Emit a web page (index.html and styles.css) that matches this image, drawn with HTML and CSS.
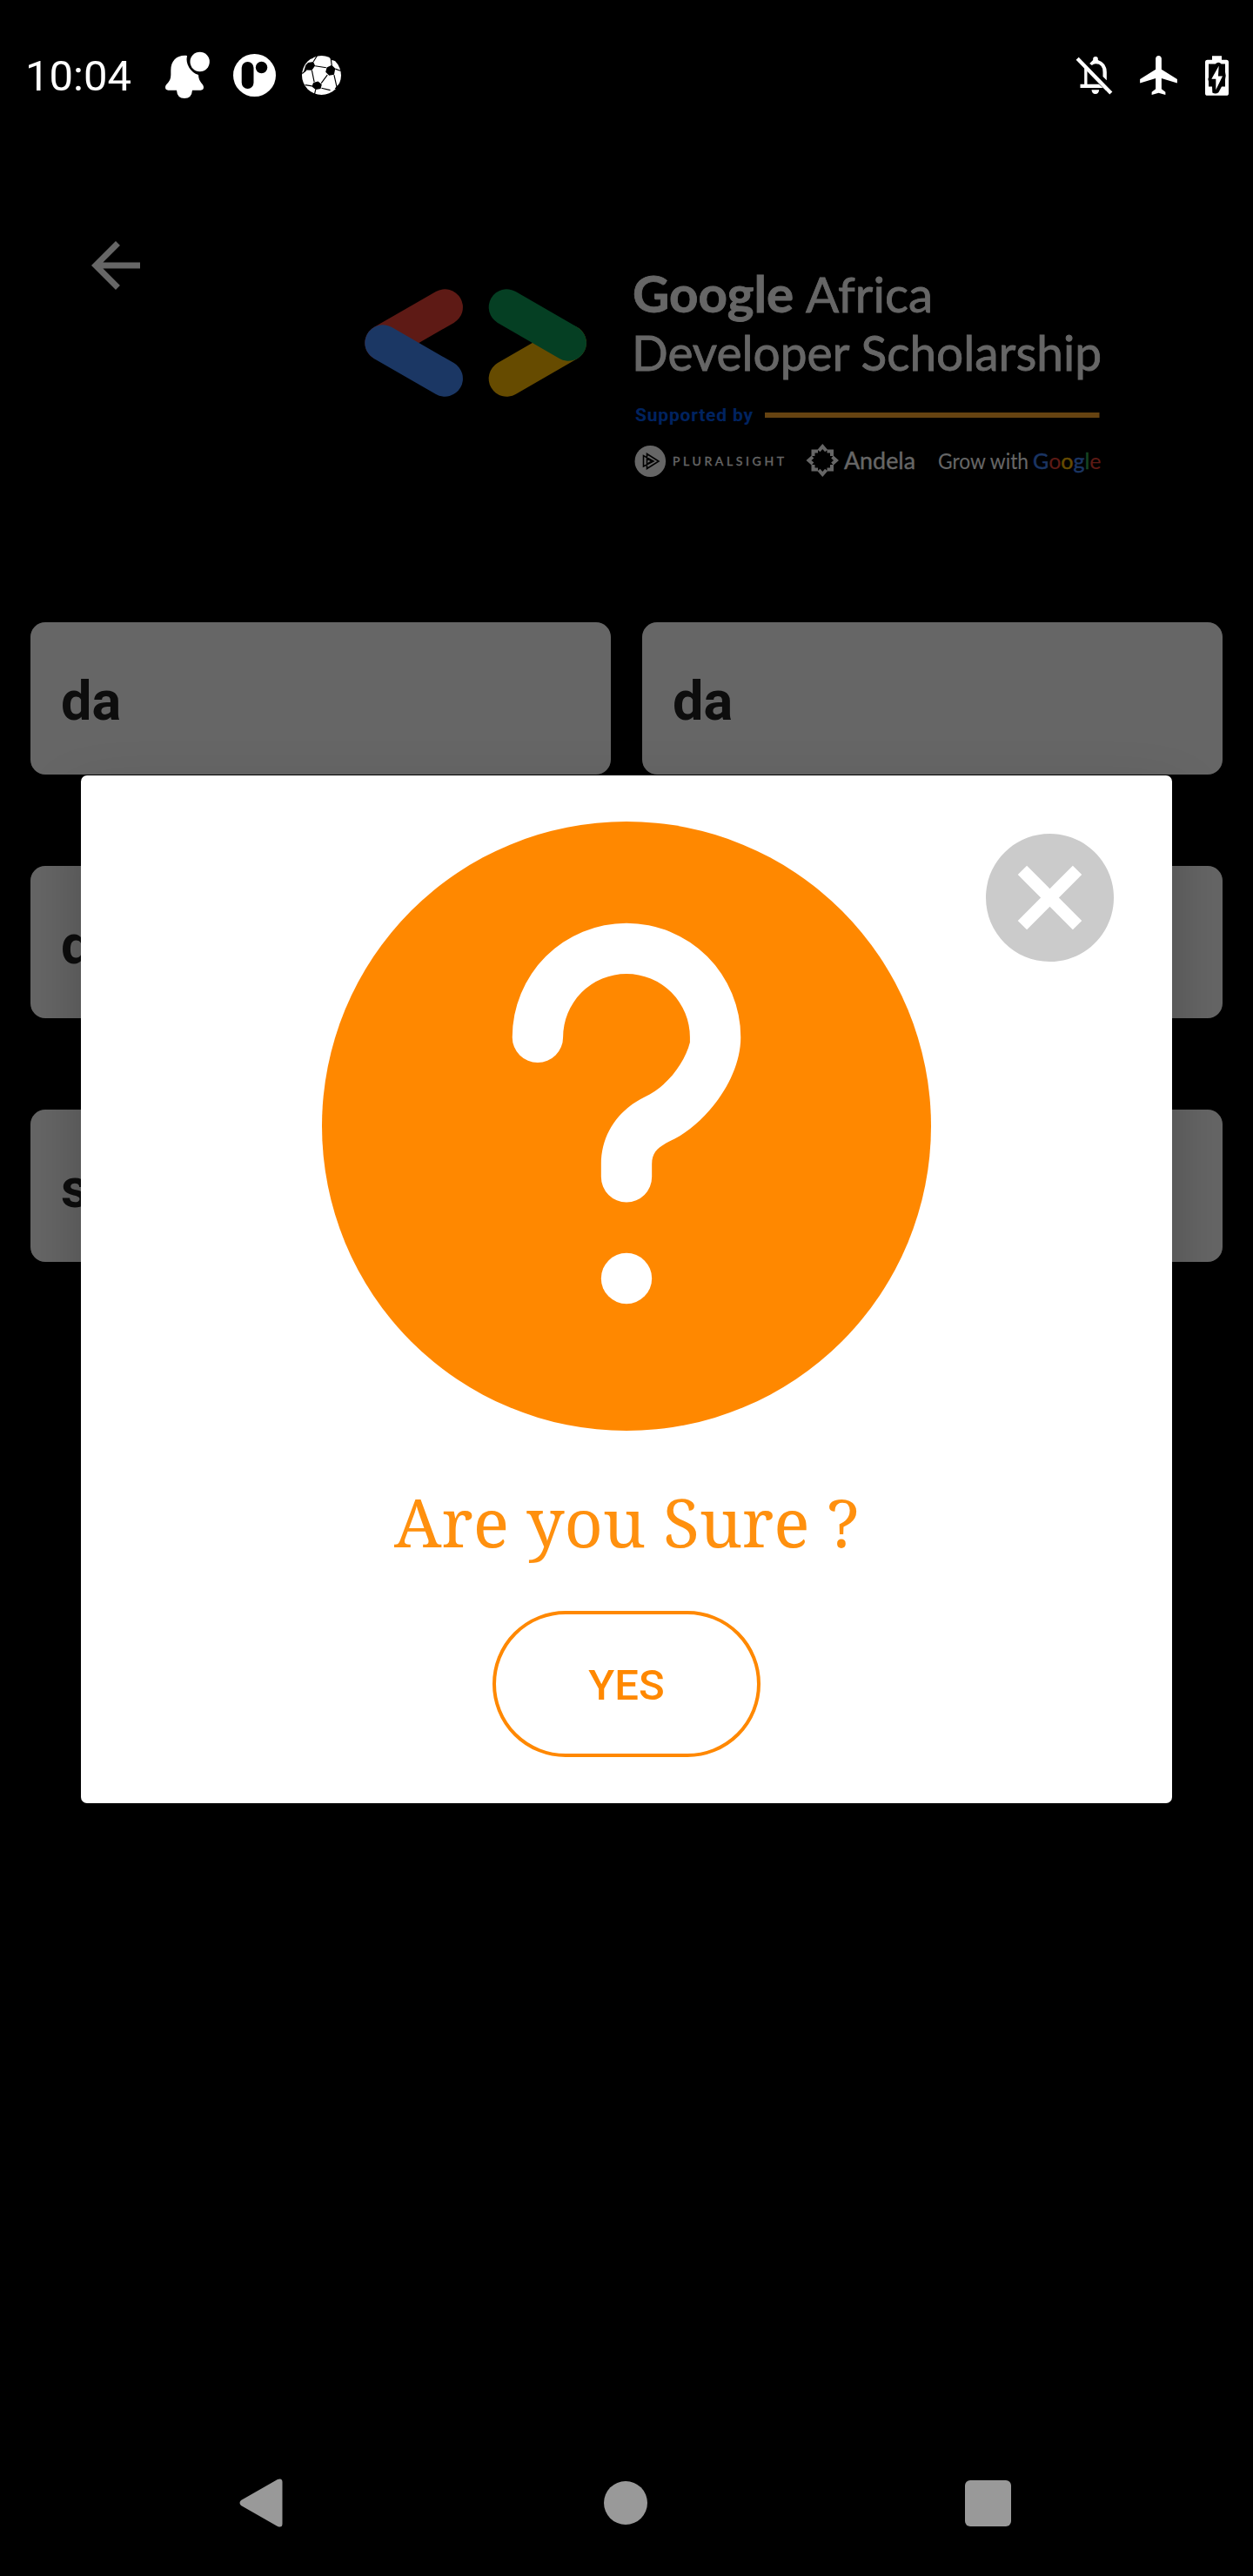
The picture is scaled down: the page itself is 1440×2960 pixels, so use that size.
FILE: index.html
```html
<!DOCTYPE html>
<html lang="en">
<head>
<meta charset="utf-8">
<title>Submit project</title>
<link rel="stylesheet" href="styles.css">
</head>
<body>
<div class="screen">
  <header class="status">
    <span class="clock">10:04</span>
    <svg class="ic-bell" viewBox="570 60 153 159"><path d="M645 72A57 57 0 0 0 684 138C685 165 702 168 702 181Q702 191 692 191H663Q661 219 636 219Q611 219 609 191H580Q570 191 570 181C570 168 589 165 589 138V122C589 88 612 68 645 72Z"/><circle cx="689" cy="93" r="33.500"/></svg>
    <svg class="ic-p" viewBox="0 0 146 146"><circle cx="73" cy="73" r="73"/><rect class="hole" x="29" y="27" width="41" height="92" rx="20.500"/><circle class="hole" cx="97" cy="46" r="20"/></svg>
    <svg class="ic-ball" viewBox="1041 72 134 134"><circle cx="1108" cy="139" r="67"/><path class="hole" d="M1062 96L1080 93L1086 106L1075 122L1056 121L1046 130L1054 104ZM1126 112L1143 104L1155 116L1151 137L1134 140L1122 128ZM1080 164L1096 160L1109 170L1105 185L1088 188L1075 178ZM1160 176L1176 162V185H1153ZM1072 84L1090 72H1078ZM1134 77L1148 82L1156 90L1142 87ZM1058 189L1084 203L1080 208L1052 196Z"/><path class="seam" d="M1086 107L1124 113M1075 122L1083 162M1128 138L1107 166M1080 93L1093 72M1143 105L1140 82M1155 117L1174 124M1056 121L1042 133M1076 176L1052 172M1108 183L1138 190M1151 138L1160 178M1088 188L1084 204"/></svg>
    <svg class="ic-mute" viewBox="110 74 128 132"><path class="line" d="M116 81L232 200"/><path d="M140 113L150 123V169H190L204 182H126V169H140ZM158 98L170 86V82Q170 74 179 74Q187 74 187 82V86Q217 96 217 128V156L204 143V128Q204 99 179 99Q172 99 166 104ZM165 189H191Q190 203 178 203Q166 203 165 189Z"/></svg>
    <svg class="ic-plane" viewBox="2 2 19 20"><path d="M21 16v-2l-8-5V3.500C13 2.670 12.330 2 11.500 2S10 2.670 10 3.500V9l-8 5v2l8-2.500V19l-2 1.500V22l3.500-1 3.500 1v-1.500L13 19v-5.500l8 2.500z"/></svg>
    <svg class="ic-batt" viewBox="555 69 81 137"><path d="M579 69H612V83H628Q636 83 636 91V198Q636 206 628 206H563Q555 206 555 198V91Q555 83 563 83H579Z"/><path class="hole" d="M567 97H590Q601 86 611 97H624V125Q628 137 624 150V175H612L601 195Q591 203 580 196L579 175H567V157Q563 150 567 143Z"/><path d="M602 104L577 149H592V186L615 139H600Z"/></svg>
  </header>

  <section class="banner">
    <svg class="back" viewBox="0 0 24 24"><path d="M20 11H7.830l5.590-5.590L12 4l-8 8 8 8 1.410-1.410L7.830 13H20v-2z"/></svg>
    <svg class="logo" viewBox="410 310 870 250">
      <g class="pill">
        <path class="red" d="M440 394L511.300 353"/><path class="blue" d="M440 394L511.300 435"/>
        <path class="yellow" d="M653.300 394L582.300 435"/><path class="green" d="M582.300 353L653.300 394"/>
      </g>
      <g class="brand">
        <text class="strong" x="727" y="359" textLength="185" lengthAdjust="spacingAndGlyphs">Google</text>
        <text x="926" y="359" textLength="146" lengthAdjust="spacingAndGlyphs">Africa</text>
        <text x="726" y="425.500" textLength="540" lengthAdjust="spacingAndGlyphs">Developer Scholarship</text>
      </g>
      <text class="support" x="730" y="483.500" textLength="135">Supported by</text>
      <rect class="rule" x="879" y="474" width="384.500" height="6"/>
      <ellipse class="white" cx="747.300" cy="530" rx="17.800" ry="18"/>
      <path class="play" d="M739.500 523.500V536L751 530ZM743.500 521.500V538.500L757 530ZM743.500 526.500V533.500L749 530Z"/>
      <text class="plural" x="773" y="535" textLength="128">PLURALSIGHT</text>
      <path class="star" d="M941 518L945.300 513L949.600 518M950.500 518.500H956V524M956.500 525L961 529L956.500 533M956 534V539.500H950.500M949.600 540L945.300 545L941 540M940 539.500H934.500V534M934 533L929.500 529L934 525M934.500 524V518.500H940"/>
      <text class="andela" x="970" y="538.500" textLength="82" lengthAdjust="spacingAndGlyphs">Andela</text>
      <text class="grow" x="1078" y="538.500" textLength="104" lengthAdjust="spacingAndGlyphs">Grow with</text>
      <text class="google" x="1187" y="538.500"><tspan class="f-blue">G</tspan><tspan class="f-red">o</tspan><tspan class="f-yellow">o</tspan><tspan class="f-blue">g</tspan><tspan class="f-green">l</tspan><tspan class="f-red">e</tspan></text>
    </svg>
  </section>

  <main class="fields">
    <div class="field">da</div><div class="field">da</div>
    <div class="field">da</div><div class="field"></div>
    <div class="field">s</div><div class="field"></div>
  </main>

  <nav class="nav">
    <svg class="nav-back" viewBox="0 0 50 56"><path d="M2 25L44 1Q49.500-1 49.500 4V52Q49.500 57 44 55L2 31Q-1 28 2 25Z"/></svg>
    <span class="nav-home"></span>
    <span class="nav-recent"></span>
  </nav>

  <div class="scrim">
    <div class="dialog">
      <svg class="question" viewBox="0 0 24 24"><circle class="orange" cx="12" cy="12" r="12"/><path class="white" d="M7.500 8.500A4.500 4.500 0 0 1 16.500 8.500C16.500 10.100 15.200 11.800 13.900 12.500C13.400 12.760 13 12.900 13 13.500V14A1 1 0 0 1 11 14V13.500C11 12.300 11.700 11.350 12.700 10.860C13.600 10.450 14.300 9.500 14.500 8.700V8.500A2.500 2.500 0 0 0 9.500 8.500A1 1 0 0 1 7.500 8.500Z"/><circle class="white" cx="12" cy="18" r="1"/></svg>
      <svg class="close" viewBox="2 2 20 20"><path d="M12 2C6.470 2 2 6.470 2 12s4.470 10 10 10 10-4.470 10-10S17.530 2 12 2zm5 13.590L15.590 17 12 13.410 8.410 17 7 15.590 10.590 12 7 8.410 8.410 7 12 10.590 15.590 7 17 8.410 13.410 12 17 15.590z"/></svg>
      <svg class="title" viewBox="0 0 540 106"><text x="3" y="77" textLength="534" lengthAdjust="spacingAndGlyphs">Are you Sure ?</text></svg>
      <button class="yes">YES</button>
    </div>
  </div>
</div>
</body>
</html>
```
FILE: styles.css
```css
* { box-sizing: border-box; }
body { margin: 0; background: #000; font-family: Roboto, sans-serif; }
svg { display: block; flex: none; overflow: visible; }
.screen { position: relative; width: 1440px; height: 2960px; background: #000; display: flex; flex-direction: column; overflow: hidden; }

.status { position: relative; z-index: 2; height: 172px; padding: 0 28px 0 29px; display: flex; align-items: center; fill: #fff; }
.clock { width: 161px; color: #fff; font-size: 49px; line-height: 60px; padding-top: 3px; }
.hole { fill: #000; }
.seam { fill: none; stroke: #000; stroke-width: 3.500; }
.ic-bell { width: 51px; height: 53px; }
.ic-p { width: 49px; height: 49px; margin: 0 30px 0 27px; }
.ic-ball { width: 45px; height: 45px; }
.ic-mute { width: 43px; height: 44px; margin: 2px 0 0 auto; }
.ic-mute .line { fill: none; stroke: #fff; stroke-width: 13; }
.ic-plane { width: 43px; height: 45px; margin: 0 32px 0 31px; }
.ic-batt { width: 27px; height: 46px; margin-top: 1px; }

.banner { height: 543px; padding: 91px 160px 0 91px; display: flex; align-items: flex-start; justify-content: space-between; }
.back { width: 84px; height: 84px; fill: #fff; }
.logo { width: 870px; height: 250px; margin-top: 47px; font-family: Lato, sans-serif; fill: #fff; }
.pill { fill: none; stroke-width: 41.300px; stroke-linecap: round; }
.red { stroke: #ea4335; }
.blue { stroke: #4489fa; }
.yellow { stroke: #ffbb00; }
.green { stroke: #0d9d58; }
.brand { font-size: 56.500px; stroke: #fff; stroke-width: .8; }
.strong { font-weight: 700; }
.white { fill: #fff; }
.support { font: 700 21px Roboto, sans-serif; fill: #0058ee; }
.rule { fill: #ffa82b; }
.play { fill: none; stroke: #000; stroke-width: 1.600; }
.plural { font-size: 14px; stroke: #fff; stroke-width: .3; }
.star { fill: none; stroke: #fff; stroke-width: 4; }
.andela { font-size: 27px; stroke: #fff; stroke-width: .3; }
.grow { font-size: 25px; }
.google { font-size: 25px; }
.f-blue { fill: #4285f4; stroke: #4285f4; stroke-width: .4; }
.f-red { fill: #ea4335; stroke-width: .4; }
.f-yellow { fill: #fbbc04; stroke: #fbbc04; stroke-width: .4; }
.f-green { fill: #34a853; stroke: #34a853; stroke-width: .4; }

.fields { display: grid; grid-template-columns: 1fr 1fr; grid-auto-rows: 175px; gap: 105px 36px; padding: 0 35px; }
.field { background: #fff; color: #212121; border-radius: 17px; padding: 6px 35px 0; display: flex; align-items: center; font-size: 63px; font-weight: 700; }

.nav { position: relative; z-index: 2; margin-top: auto; height: 168px; padding: 0 278px 0 275px; display: flex; align-items: center; justify-content: space-between; fill: #999; }
.nav-back { width: 50px; height: 56px; }
.nav-home { width: 50px; height: 50px; border-radius: 50%; background: #999; margin-left: 4px; }
.nav-recent { width: 53px; height: 53px; border-radius: 6px; background: #999; }

.scrim { position: absolute; inset: 0; background: rgba(0, 0, 0, .6); display: flex; flex-direction: column; align-items: center; padding-top: 891px; }
.dialog { position: relative; width: 1254px; height: 1181px; padding-top: 53px; background: #fff; border-radius: 7px; display: flex; flex-direction: column; align-items: center; box-shadow: 0 35px 70px rgba(0, 0, 0, .25); }
.question { width: 700px; height: 700px; }
.orange { fill: #ff8800; }
.close { position: absolute; top: 67px; right: 67px; width: 147px; height: 147px; fill: #cbcbcb; }
.title { width: 540px; height: 106px; margin-top: 57px; font-family: "Noto Serif", "Droid Serif", "DejaVu Serif Condensed", "DejaVu Serif", serif; font-size: 76px; fill: #ff900e; }
.yes { margin-top: 44px; width: 308px; height: 168px; padding: 3px 0 0; border: 4px solid #ff8800; border-radius: 84px; background: none; color: #ff8800; font: 500 49px Roboto, sans-serif; }
```
